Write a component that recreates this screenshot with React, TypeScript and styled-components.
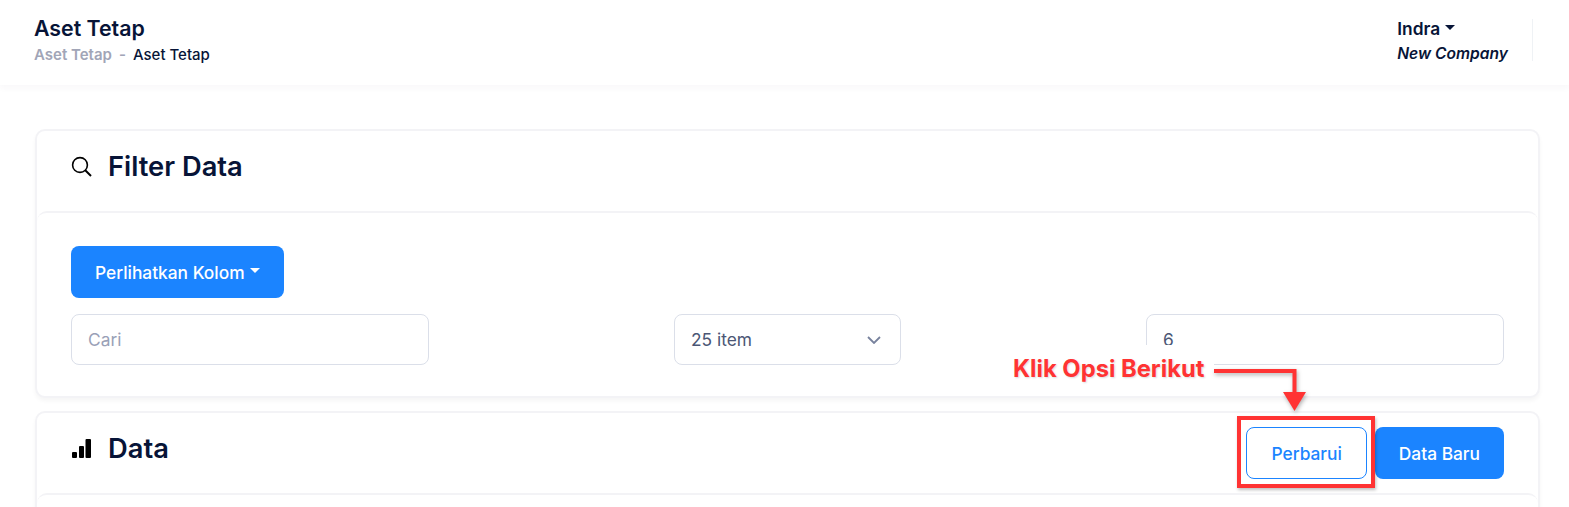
import { createGlobalStyle, styled } from "styled-components";

const GlobalStyle = createGlobalStyle`
  html, body {
    margin: 0;
    padding: 0;
    height: 507px;
    overflow: hidden;
    background: #ffffff;
    font-family: Inter, "Noto Sans", sans-serif;
    color: #071437;
  }
  * {
    box-sizing: border-box;
  }
`;

const Page = styled.div`
  position: relative;
  width: 1569px;
  height: 507px;
  overflow: hidden;
`;

const Topbar = styled.header`
  height: 85px;
  padding: 0 36px 0 34px;
  display: flex;
  align-items: flex-start;
  justify-content: space-between;
  background: #fff;
  box-shadow: 0 3px 6px rgba(82, 63, 105, 0.04);
`;

const TitleBlock = styled.div`
  padding-top: 15px;
`;

const PageTitle = styled.h1`
  margin: 0;
  font-size: 21.33px;
  line-height: 26px;
  font-weight: 600;
  color: #071437;
`;

const Breadcrumb = styled.div`
  margin-top: 5px;
  display: flex;
  gap: 7px;
  font-size: 15px;
  line-height: 18px;
  font-weight: 500;
  color: #071437;
`;

const CrumbMuted = styled.span`
  color: #a1a5b7;
  font-weight: 600;
`;

const UserBlock = styled.div`
  margin-top: 19px;
  height: 42px;
  padding-right: 24px;
  border-right: 1px solid #eff2f5;
  display: flex;
  flex-direction: column;
  gap: 6px;
`;

const UserName = styled.div`
  display: flex;
  align-items: center;
  gap: 5px;
  font-size: 17.33px;
  line-height: 20px;
  font-weight: 600;
  color: #071437;
`;

const Caret = styled.span<{ $color?: string }>`
  width: 0;
  height: 0;
  margin-top: -4px;
  border-left: 5px solid transparent;
  border-right: 5px solid transparent;
  border-top: 5px solid ${(p) => p.$color ?? "#071437"};
`;

const CompanyName = styled.div`
  font-size: 15.6px;
  line-height: 18px;
  font-weight: 600;
  font-style: italic;
  color: #071437;
`;

const Content = styled.main`
  padding: 44px 29px 0 35px;
  display: flex;
  flex-direction: column;
  gap: 13px;
`;

const Card = styled.section`
  border: 2px solid #f3f3f6;
  border-radius: 10px;
  background: #fff;
  box-shadow: 0 3px 4px rgba(0, 0, 0, 0.04);
`;

const CardHeader = styled.div`
  height: 80px;
  padding: 0 34px;
  display: flex;
  align-items: center;
  justify-content: space-between;
`;

const CardTitle = styled.h2`
  margin: 0 0 9px;
  display: flex;
  align-items: center;
  gap: 16px;
  font-size: 27.3px;
  line-height: 32px;
  font-weight: 600;
  color: #071437;
`;

const IconSlot = styled.span`
  width: 21px;
  height: 21px;
  display: flex;
  color: #000;
`;

const CardBody = styled.div`
  height: 185px;
  padding: 33px 34px 0;
  border-top: 2px solid #f3f3f6;
  border-radius: 10px;
`;

const PrimaryButton = styled.button`
  height: 52px;
  padding: 0 24px;
  display: inline-flex;
  align-items: center;
  gap: 5px;
  border: 0;
  border-radius: 8px;
  background: #1b84ff;
  color: #fff;
  font-family: inherit;
  font-size: 17.33px;
  font-weight: 500;
`;

const OutlineButton = styled(PrimaryButton)`
  border: 1px solid #1b84ff;
  background: #fff;
  color: #1b84ff;
`;

const FilterRow = styled.div`
  margin-top: 16px;
  display: flex;
  justify-content: space-between;
`;

const Field = styled.div<{ $width: number; $muted?: boolean }>`
  width: ${(p) => p.$width}px;
  height: 51px;
  padding: 0 16px;
  display: flex;
  align-items: center;
  justify-content: space-between;
  border: 1px solid #dbdfe9;
  border-radius: 8px;
  font-size: 17.33px;
  font-weight: 400;
  color: ${(p) => (p.$muted ? "#99a1b7" : "#4b5675")};
`;

const Chevron = styled.svg`
  margin-right: 3px;
`;

const Actions = styled.div`
  display: flex;
  gap: 8px;
`;

/* screenshot annotation, drawn on top of the page */
const CalloutPatch = styled.div`
  position: absolute;
  left: 1000px;
  top: 345px;
  width: 214px;
  height: 44px;
  background: #fff;
`;

const CalloutText = styled.div`
  position: absolute;
  left: 1013px;
  top: 354px;
  font-size: 23.75px;
  line-height: 30px;
  font-weight: 700;
  color: #ff3333;
  text-shadow: 1px 1px 2px rgba(0, 0, 0, 0.15);
`;

const CalloutArrow = styled.svg`
  position: absolute;
  left: 1205px;
  top: 360px;
  filter: drop-shadow(1px 2px 2px rgba(0, 0, 0, 0.3));
`;

const Highlight = styled.div`
  position: absolute;
  left: 1237px;
  top: 416px;
  width: 138px;
  height: 72px;
  border: 4px solid #ff3333;
  box-shadow: 1px 2px 3px rgba(0, 0, 0, 0.25);
`;

export default function App() {
  return (
    <Page>
      <GlobalStyle />
      <Topbar>
        <TitleBlock>
          <PageTitle>Aset Tetap</PageTitle>
          <Breadcrumb>
            <CrumbMuted>Aset Tetap</CrumbMuted>
            <CrumbMuted>-</CrumbMuted>
            <span>Aset Tetap</span>
          </Breadcrumb>
        </TitleBlock>
        <UserBlock>
          <UserName>
            Indra <Caret />
          </UserName>
          <CompanyName>New Company</CompanyName>
        </UserBlock>
      </Topbar>
      <Content>
        <Card>
          <CardHeader>
            <CardTitle>
              <IconSlot>
                <svg width="21" height="21" viewBox="0 0 21 21" fill="none" stroke="currentColor" strokeWidth="1.6">
                  <circle cx="9" cy="9" r="7.4" />
                  <path d="M14 14l6 6" strokeWidth="2" />
                </svg>
              </IconSlot>
              Filter Data
            </CardTitle>
          </CardHeader>
          <CardBody>
            <PrimaryButton>
              Perlihatkan Kolom <Caret $color="#fff" />
            </PrimaryButton>
            <FilterRow>
              <Field $width={358} $muted>
                Cari
              </Field>
              <Field $width={227}>
                25 item
                <Chevron width="14" height="8" viewBox="0 0 14 8" fill="none" stroke="#78829d" strokeWidth="1.8">
                  <path d="M1 1l6 6 6-6" />
                </Chevron>
              </Field>
              <Field $width={358}>6</Field>
            </FilterRow>
          </CardBody>
        </Card>
        <Card>
          <CardHeader>
            <CardTitle>
              <IconSlot>
                <svg width="21" height="21" viewBox="0 0 21 21" fill="currentColor">
                  <rect x="1" y="14" width="5" height="6" rx="1" />
                  <rect x="8" y="8" width="5" height="12" rx="1" />
                  <rect x="14.5" y="1" width="5.5" height="19" rx="1" />
                </svg>
              </IconSlot>
              Data
            </CardTitle>
            <Actions>
              <OutlineButton>Perbarui</OutlineButton>
              <PrimaryButton>Data Baru</PrimaryButton>
            </Actions>
          </CardHeader>
          <CardBody />
        </Card>
      </Content>
      <CalloutPatch />
      <CalloutText>Klik Opsi Berikut</CalloutText>
      <CalloutArrow width="110" height="55" viewBox="0 0 110 55">
        <path d="M9 11H89.5V34" fill="none" stroke="#ff3333" strokeWidth="4" />
        <path d="M78 32H101L89.5 51Z" fill="#ff3333" />
      </CalloutArrow>
      <Highlight />
    </Page>
  );
}
